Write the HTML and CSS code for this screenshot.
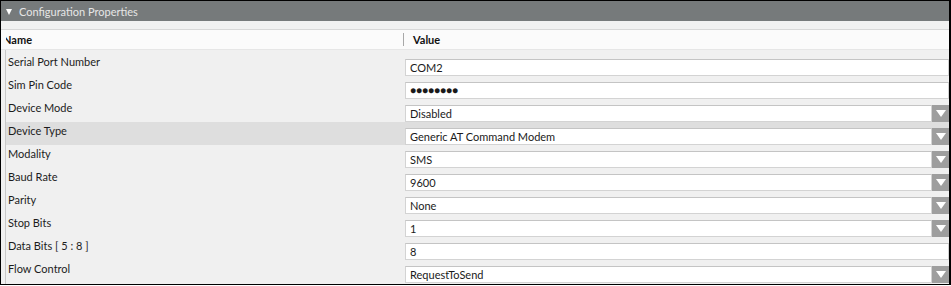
FILE: index.html
```html
<!DOCTYPE html>
<html>
<head>
<meta charset="utf-8">
<link rel="stylesheet" href="styles.css">
</head>
<body>
<div class="frame">
  <div class="titlebar"><span class="caret"></span><span class="title">Configuration Properties</span></div>
  <div class="strip"></div>
  <div class="colhead">
    <div class="col-name"><span class="name-text">Name</span></div>
    <div class="col-value"><span class="value-text">Value</span></div>
  </div>
  <div class="rows">
    <div class="row"><div class="label">Serial Port Number</div><div class="cell"><div class="input">COM2</div></div></div>
    <div class="row"><div class="label">Sim Pin Code</div><div class="cell"><div class="input pin">&#9679;&#9679;&#9679;&#9679;&#9679;&#9679;&#9679;&#9679;</div></div></div>
    <div class="row"><div class="label">Device Mode</div><div class="cell"><div class="input">Disabled</div><div class="drop"><span></span></div></div></div>
    <div class="row sel"><div class="label">Device Type</div><div class="cell"><div class="input">Generic AT Command Modem</div><div class="drop"><span></span></div></div></div>
    <div class="row"><div class="label">Modality</div><div class="cell"><div class="input">SMS</div><div class="drop"><span></span></div></div></div>
    <div class="row"><div class="label">Baud Rate</div><div class="cell"><div class="input">9600</div><div class="drop"><span></span></div></div></div>
    <div class="row"><div class="label">Parity</div><div class="cell"><div class="input">None</div><div class="drop"><span></span></div></div></div>
    <div class="row"><div class="label">Stop Bits</div><div class="cell"><div class="input">1</div><div class="drop"><span></span></div></div></div>
    <div class="row"><div class="label">Data Bits [ 5 : 8 ]</div><div class="cell"><div class="input">8</div></div></div>
    <div class="row"><div class="label">Flow Control</div><div class="cell"><div class="input">RequestToSend</div><div class="drop"><span></span></div></div></div>
  </div>
</div>
</body>
</html>
```
FILE: styles.css
```css
html, body { margin: 0; padding: 0; background: #fff; }
body { font-family: "Lato", "Open Sans", sans-serif; font-size: 11px; }
.frame {
  width: 948px; height: 283px;
  border: 1px solid #000; border-right-width: 2px;
  background: #f0f0f0; overflow: hidden;
  display: flex; flex-direction: column;
}
.titlebar {
  height: 20px; background: #767a7b; color: #e6e6e6;
  display: flex; align-items: center; padding-left: 5px; gap: 7px;
  font-size: 11px;
}
.caret { width: 0; height: 0; border-left: 3.5px solid transparent; border-right: 3.5px solid transparent; border-top: 6px solid #fff; margin-top: 1px; }
.strip { height: 8px; background: #f1f1f1; border-bottom: 1px solid #d8d8d8; }
.colhead {
  height: 19px; background: #fbfbfb; border-bottom: 1px solid #e6e6e6;
  display: flex; align-items: center; font-weight: bold; color: #111;
}
.col-name { width: 397px; margin-left: 5px; overflow: hidden; }
.name-text { display: inline-block; margin-left: -3px; }
.col-value { flex: 1; border-left: 1px solid #a8a8a8; height: 13px; display: flex; align-items: center; padding-left: 9px; }
.rows { flex: 1; border-left: 1px solid #c8c8c8; margin-left: 4px; padding-top: 3px; }
.row { height: 23px; display: flex; }
.row.sel { background: #dedede; }
.label { width: 397px; padding-left: 2px; padding-top: 2px; color: #1c1c1c; line-height: 14px; }
.cell { flex: 1; display: flex; padding-top: 6px; height: 17px; }
.input {
  flex: 1; background: #fff; border: 1px solid #d3d3d3; border-top-color: #c4c4c4;
  height: 15px; line-height: 15px; padding-left: 4px; color: #1a1a1a;
}
.pin { font-size: 10px; letter-spacing: 0px; }
.drop { width: 17px; height: 17px; background: #9e9e9e; display: flex; align-items: center; justify-content: center; }
.drop span { width: 0; height: 0; border-left: 5px solid transparent; border-right: 5px solid transparent; border-top: 7px solid #fff; }
```
